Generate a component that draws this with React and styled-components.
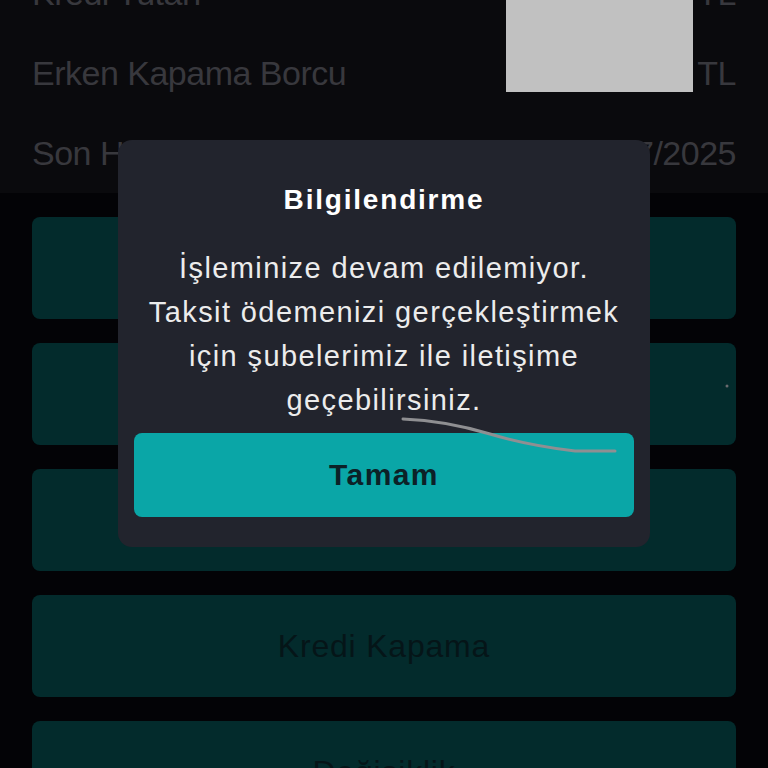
import styled, { createGlobalStyle } from "styled-components";

const GlobalStyle = createGlobalStyle`
    html, body {
        margin: 0;
        padding: 0;
        background: #030306;
    }
    * {
        box-sizing: border-box;
    }
`;

const Screen = styled.div`
    position: relative;
    width: 768px;
    height: 768px;
    overflow: hidden;
    background-color: #030306;
    font-family: "Liberation Sans", Arial, sans-serif;
`;

const InfoPanel = styled.div`
    position: relative;
    margin-top: -47px;
    background-color: #0a0a0d;
    padding: 0 32px;
    display: flex;
    flex-direction: column;
`;

const InfoRow = styled.div`
    height: 80px;
    display: flex;
    align-items: center;
    justify-content: space-between;
    color: #38383d;
    font-size: 34px;
    letter-spacing: -0.5px;
`;

// redaction block from the original screenshot, lies over the amounts
const Redacted = styled.div`
    position: absolute;
    left: 506px;
    top: 47px;
    width: 187px;
    height: 92px;
    background-color: #c1c1c1;
`;

const ActionList = styled.div`
    display: flex;
    flex-direction: column;
    gap: 24px;
    padding: 24px 32px;
`;

const ActionButton = styled.div`
    height: 102px;
    flex-shrink: 0;
    border-radius: 8px;
    background-color: #032b2c;
    display: flex;
    align-items: center;
    justify-content: center;
    color: #051518;
    font-size: 32px;
    letter-spacing: 0.8px;
`;

const Dialog = styled.div`
    position: absolute;
    left: 118px;
    top: 140px;
    width: 532px;
    height: 407px;
    border-radius: 14px;
    background-color: #22242d;
    padding: 43px 16px 30px;
    display: flex;
    flex-direction: column;
    align-items: stretch;
    text-align: center;
`;

const DialogTitle = styled.div`
    color: #ffffff;
    font-size: 28px;
    line-height: 34px;
    font-weight: 700;
    letter-spacing: 1.8px;
`;

const DialogBody = styled.div`
    margin-top: 29px;
    color: #ececec;
    font-size: 29px;
    line-height: 44px;
    letter-spacing: 1.4px;
`;

const ConfirmButton = styled.div`
    margin-top: 11px;
    height: 85px;
    border-radius: 8px;
    background-color: #0aa6a7;
    display: flex;
    align-items: center;
    justify-content: center;
    color: #0c2127;
    font-size: 30px;
    font-weight: 700;
    letter-spacing: 1.4px;
`;

const Scribble = styled.svg`
    position: absolute;
    left: 0;
    top: 0;
    pointer-events: none;
`;

const rows = [
    { label: "Kredi Tutarı", value: "TL" },
    { label: "Erken Kapama Borcu", value: "TL" },
    { label: "Son Hesaplama Tarihi", value: "15/07/2025" },
];

const actions = ["Taksit Ödeme", "Ara Ödeme", "Ödeme Planı", "Kredi Kapama", "Değişiklik"];

export default function App() {
    return (
        <>
            <GlobalStyle />
            <Screen>
                <InfoPanel>
                    {rows.map((r) => (
                        <InfoRow key={r.label}>
                            <span>{r.label}</span>
                            <span>{r.value}</span>
                        </InfoRow>
                    ))}
                    <Redacted />
                </InfoPanel>
                <ActionList>
                    {actions.map((a) => (
                        <ActionButton key={a}>{a}</ActionButton>
                    ))}
                </ActionList>
                <Dialog>
                    <DialogTitle>Bilgilendirme</DialogTitle>
                    <DialogBody>
                        İşleminize devam edilemiyor.
                        <br />
                        Taksit ödemenizi gerçekleştirmek
                        <br />
                        için şubelerimiz ile iletişime
                        <br />
                        geçebilirsiniz.
                    </DialogBody>
                    <ConfirmButton>Tamam</ConfirmButton>
                </Dialog>
                <Scribble width="768" height="768" viewBox="0 0 768 768">
                    <path
                        d="M403 419 C 430 420, 460 425, 490 434 S 550 448, 575 451 L 615 451"
                        fill="none"
                        stroke="#8f8f92"
                        strokeWidth="3"
                        strokeLinecap="round"
                    />
                    <circle cx="727" cy="386" r="1.5" fill="#6a6a6e" />
                </Scribble>
            </Screen>
        </>
    );
}
